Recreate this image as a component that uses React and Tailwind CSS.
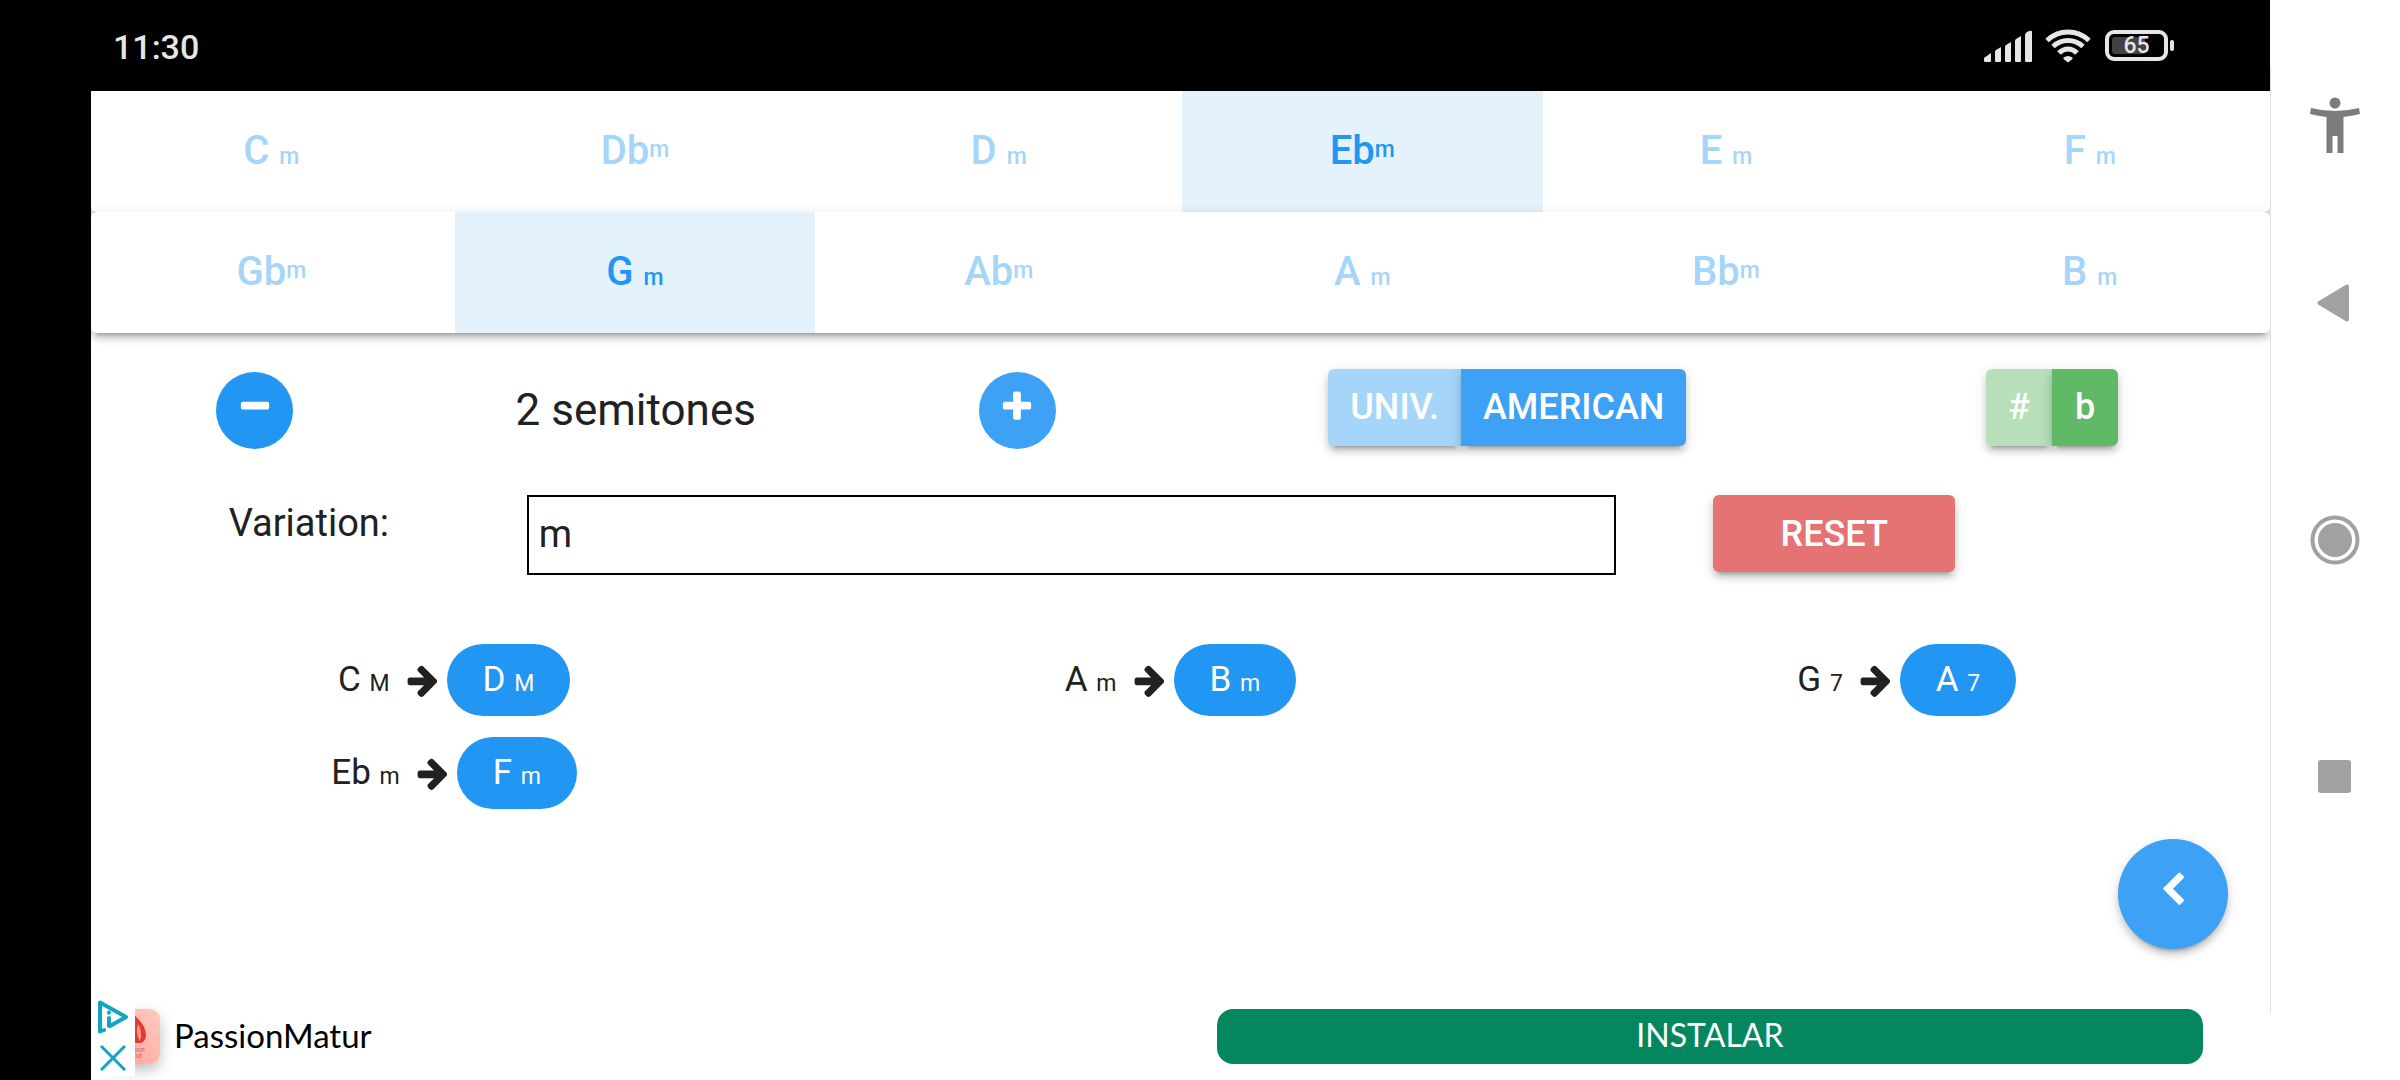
import { useState } from 'react'

const ROWS = [
  ['C', 'Db', 'D', 'Eb', 'E', 'F'],
  ['Gb', 'G', 'Ab', 'A', 'Bb', 'B'],
]

const CHORDS = [
  { from: 'C', to: 'D', variation: 'M' },
  { from: 'A', to: 'B', variation: 'm' },
  { from: 'G', to: 'A', variation: '7' },
  { from: 'Eb', to: 'F', variation: 'm' },
]

const ICONS = {
  minus: 'M1600 736v192q0 40-28 68t-68 28h-1216q-40 0-68-28t-28-68v-192q0-40 28-68t68-28h1216q40 0 68 28t28 68z',
  plus: 'M1600 736v192q0 40-28 68t-68 28h-416v416q0 40-28 68t-68 28h-192q-40 0-68-28t-28-68v-416h-416q-40 0-68-28t-28-68v-192q0-40 28-68t68-28h416v-416q0-40 28-68t68-28h192q40 0 68 28t28 68v416h416q40 0 68 28t28 68z',
  arrow: 'M1600 960q0 54-37 91l-651 651q-39 37-91 37-51 0-90-37l-75-75q-38-38-38-91t38-91l293-293h-704q-52 0-84.5-37.5t-32.5-90.5v-128q0-53 32.5-90.5t84.5-37.5h704l-293-294q-38-36-38-90t38-90l75-75q38-38 90-38 53 0 91 38l651 651q37 35 37 90z',
  chevron: 'M1427 301l-531 531 531 531q19 19 19 45t-19 45l-166 166q-19 19-45 19t-45-19l-742-742q-19-19-19-45t19-45l742-742q19-19 45-19t45 19l166 166q19 19 19 45t-19 45z',
}

const SHADOW = 'shadow-[0_8px_3px_-6px_rgba(0,0,0,0.2),0_6px_6px_rgba(0,0,0,0.14),0_3px_14px_rgba(0,0,0,0.12)]'

function Icon({ name }) {
  return (
    <svg className="w-9 h-9" viewBox="0 0 1792 1792" fill="currentColor" aria-hidden="true">
      <path d={ICONS[name]} />
    </svg>
  )
}

function StatusBar() {
  return (
    <header className="h-[91px] bg-black text-[#e6e6e6] flex items-center justify-between pl-[22px] pr-24">
      <span className="text-[34px] font-medium pt-1">11:30</span>
      <div className="flex items-center gap-3">
        <svg className="w-[49px] h-8" viewBox="0 0 49 32" fill="currentColor" aria-hidden="true">
          <path d="M0 28l7-5v8q0 1-1 1H1q-1 0-1-1z" />
          <path d="M11 22q0-1 1-2l5-3v14q0 1-1 1h-4q-1 0-1-1z" />
          <path d="M21 17q0-1 1-2l5-3v19q0 1-1 1h-4q-1 0-1-1z" />
          <path d="M31 11q0-1 1-2l5-3v25q0 1-1 1h-4q-1 0-1-1z" />
          <path d="M41 5q0-2 2-3l2-1q3-1 3 1v29q0 1-1 1h-5q-1 0-1-1z" />
        </svg>
        <svg className="w-[46px] h-[34px]" viewBox="0 0 46 34" fill="none" stroke="currentColor" strokeWidth="5" aria-hidden="true">
          <path d="M2 11.500Q11 3 23 3t21 8.500" />
          <path d="M8 17.500Q14.500 11.500 23 11.500t15 6" />
          <path d="M14 24Q18 20 23 20t9 4" />
          <path d="M18.500 28.500q4.500-3 9 0v1.500L23 33.500l-4.500-3.500z" fill="currentColor" stroke="none" />
        </svg>
        <div className="flex items-center gap-[2px] pl-[2px]">
          <div className="relative w-[63px] h-[31px] rounded-[9px] border-4 border-[#e6e6e6] flex items-center justify-center">
            <span className="absolute left-[3px] top-[3px] bottom-[3px] w-[33px] rounded-[3px] bg-[#424242]" />
            <span className="relative text-[23px] leading-6 font-medium">65</span>
          </div>
          <span className="w-1 h-[11px] rounded-sm bg-[#e6e6e6]" />
        </div>
      </div>
    </header>
  )
}

function NoteButton({ note, variation, active, onClick }) {
  const flat = note.length > 1
  return (
    <button
      onClick={onClick}
      className={`h-[121px] pb-[2px] flex items-center justify-center text-[40px] font-medium ${
        active ? 'bg-[#e3f2fd] text-[#2196f3]' : 'text-[#a6d5fa]'
      }`}
    >
      {flat ? (
        <>
          {note}
          <span className="text-[23px]">{variation}</span>
        </>
      ) : (
        <span>
          {note} <span className="text-[23px]">{variation}</span>
        </span>
      )}
    </button>
  )
}

function Chord({ from, to, variation }) {
  return (
    <div className="h-[72px] flex items-center justify-center text-[35px] leading-[72px]">
      <span>
        {from} <span className="text-[23px] leading-none">{variation}</span>
      </span>
      <span className="pl-[15px] pr-[6px]">
        <Icon name="arrow" />
      </span>
      <span className="h-[72px] px-9 rounded-full bg-[#2196f3] text-white">
        {to} <span className="text-[23px] leading-none">{variation}</span>
      </span>
    </div>
  )
}

function AdBanner() {
  return (
    <footer className="relative flex items-center justify-between h-[90px] pl-[14px] pr-[67px] pt-[3px] font-[Lato,sans-serif]">
      <div className="flex items-center gap-[14px]">
        <svg className="w-[55px] h-[55px] rounded-[10px] shadow-[0_6px_14px_rgba(0,0,0,0.25)]" viewBox="0 0 55 55" aria-hidden="true">
          <defs>
            <linearGradient id="tile" x1="1" y1="0" x2="0" y2="1">
              <stop offset="0" stopColor="#ffc9c1" />
              <stop offset="1" stopColor="#ff9f98" />
            </linearGradient>
          </defs>
          <rect width="55" height="55" fill="url(#tile)" />
          <path d="M28 5q13 11 13 21 0 6-5 8H20q-5-2-5-8 0-10 13-21z" fill="#e5392f" />
          <path d="M33 15q5 8 2 17-5-7-2-17z" fill="#f79a86" />
          <text x="28" y="43" fontSize="7" textAnchor="middle" fill="#dc5a58">Passion</text>
          <text x="28" y="49" fontSize="7" textAnchor="middle" fill="#dc5a58">Matur</text>
        </svg>
        <span className="text-[33px] leading-10 pb-1 text-black">PassionMatur</span>
      </div>
      <button className="w-[47%] h-[55px] pb-1 rounded-2xl bg-[#04875f] text-white text-[32px] leading-10">INSTALAR</button>
      <div className="absolute left-0 bottom-1 w-11 h-[82px] bg-white flex flex-col items-center justify-around text-[#11a5c1]">
        <button aria-label="AdChoices">
          <svg className="w-8 h-[34px]" viewBox="0 0 32 34" fill="none" stroke="currentColor" strokeWidth="4" strokeLinejoin="round" strokeLinecap="round">
            <path d="M7 30l-4 1.500V2.500L29 17 13 26" />
            <path d="M12 18v8" />
            <path d="M12 12.500v.2" />
          </svg>
        </button>
        <button aria-label="Close ad">
          <svg className="w-[26px] h-[26px]" viewBox="0 0 26 26" stroke="currentColor" strokeWidth="3">
            <path d="M1 1l24 24M25 1L1 25" />
          </svg>
        </button>
      </div>
    </footer>
  )
}

function NavBar() {
  return (
    <nav className="w-[130px] shrink-0 bg-white pt-[66px] pb-[67px] flex">
      <div className="flex-1 flex flex-col pr-[2px] border-l border-[#e0e0e0] text-[#a1a1a1]">
        <button aria-label="Accessibility" className="grow basis-0 flex items-center justify-center text-[#7c7c7c]">
          <svg className="w-[50px] h-14" viewBox="0 0 50 56" fill="currentColor">
            <circle cx="25" cy="6" r="5.500" />
            <path d="M1 11q24 6 48 0l1 6q-8 2-16.500 3v36h-6V39h-5v17h-6V20Q8 19 0 17z" />
          </svg>
        </button>
        <button aria-label="Back" className="grow-2 basis-0 flex items-center justify-center">
          <svg className="w-8 h-[38px] mr-1" viewBox="0 0 32 38" fill="currentColor" stroke="currentColor" strokeWidth="4" strokeLinejoin="round">
            <path d="M2.500 19L30 2.500v33z" />
          </svg>
        </button>
        <button aria-label="Home" className="grow-2 basis-0 flex items-center justify-center">
          <svg className="w-[50px] h-[50px]" viewBox="0 0 50 50">
            <circle cx="25" cy="25" r="22.500" fill="none" stroke="currentColor" strokeWidth="4" />
            <circle cx="25" cy="25" r="17" fill="currentColor" />
          </svg>
        </button>
        <button aria-label="Recent apps" className="grow-2 basis-0 flex items-center justify-center">
          <span className="w-[33px] h-[33px] rounded-[3px] bg-[#a1a1a1]" />
        </button>
        <div className="grow basis-0" />
      </div>
    </nav>
  )
}

export default function App() {
  const [selected, setSelected] = useState(['Eb', 'G'])
  const [semitones, setSemitones] = useState(2)
  const [variation, setVariation] = useState('m')

  const toggle = (note) =>
    setSelected(selected.includes(note) ? selected.filter((n) => n !== note) : [...selected, note])

  return (
    <div className="min-h-screen flex bg-black font-[Roboto,sans-serif] text-[#212121]">
      <div className="w-[91px] shrink-0" />
      <div className="flex-1 min-w-0 flex flex-col">
        <StatusBar />
        <main className="relative flex-1 flex flex-col bg-white overflow-hidden">
          {ROWS.map((row) => (
            <div key={row[0]} className={`grid grid-cols-6 gap-[3px] bg-white rounded-md ${SHADOW}`}>
              {row.map((note) => (
                <NoteButton
                  key={note}
                  note={note}
                  variation={variation}
                  active={selected.includes(note)}
                  onClick={() => toggle(note)}
                />
              ))}
            </div>
          ))}

          <div className="grid grid-cols-10 items-start mt-9">
            <div className="col-span-5 flex items-center justify-between px-[125px] pt-[3px]">
              <button
                aria-label="Lower"
                onClick={() => setSemitones(semitones - 1)}
                className="w-[77px] h-[77px] pb-2 rounded-full bg-[#2196f3] text-white flex items-center justify-center"
              >
                <Icon name="minus" />
              </button>
              <span className="text-[44px] pb-[2px]">{semitones} semitones</span>
              <button
                aria-label="Raise"
                onClick={() => setSemitones(semitones + 1)}
                className="w-[77px] h-[77px] pb-2 rounded-full bg-[#3da1f5] text-white flex items-center justify-center"
              >
                <Icon name="plus" />
              </button>
            </div>
            <div className="col-span-3 flex justify-center text-white text-[36px] font-medium">
              <button className={`h-[77px] px-[22px] pb-[2px] rounded-l-md bg-[#a6d5fa] ${SHADOW}`}>UNIV.</button>
              <button className={`h-[77px] px-[22px] pb-[2px] rounded-r-md bg-[#3da1f5] ${SHADOW}`}>AMERICAN</button>
            </div>
            <div className="col-span-2 flex justify-center text-white text-[36px] font-medium">
              <button className={`h-[77px] w-[66px] pb-[2px] rounded-l-md bg-[#b7dfb9] ${SHADOW}`}>#</button>
              <button className={`h-[77px] w-[66px] pb-[2px] rounded-r-md bg-[#60b966] ${SHADOW}`}>b</button>
            </div>
          </div>

          <div className="grid grid-cols-10 items-start mt-[46px] text-[38px]">
            <label htmlFor="variation" className="col-span-2 text-center leading-[56px]">
              Variation:
            </label>
            <input
              id="variation"
              type="text"
              value={variation}
              onChange={(e) => setVariation(e.target.value)}
              className="col-span-5 h-20 px-[10px] pb-[2px] border-2 border-black bg-white"
            />
            <div className="col-span-2 flex justify-center">
              <button
                onClick={() => setSelected([])}
                className={`h-[77px] w-[242px] rounded-md bg-[#e57373] text-white text-[36px] font-medium ${SHADOW}`}
              >
                RESET
              </button>
            </div>
          </div>

          <div className="grid grid-cols-3 gap-y-[21px] mt-[69px] mb-40">
            {CHORDS.map((chord) => (
              <Chord key={chord.from} {...chord} />
            ))}
          </div>

          <button
            aria-label="Open menu"
            className={`absolute right-[42px] bottom-[131px] w-[110px] h-[110px] pb-2 rounded-full bg-[#3da1f5] text-white flex items-center justify-center ${SHADOW}`}
          >
            <Icon name="chevron" />
          </button>

          <div className="mt-auto">
            <AdBanner />
          </div>
        </main>
      </div>
      <NavBar />
    </div>
  )
}
